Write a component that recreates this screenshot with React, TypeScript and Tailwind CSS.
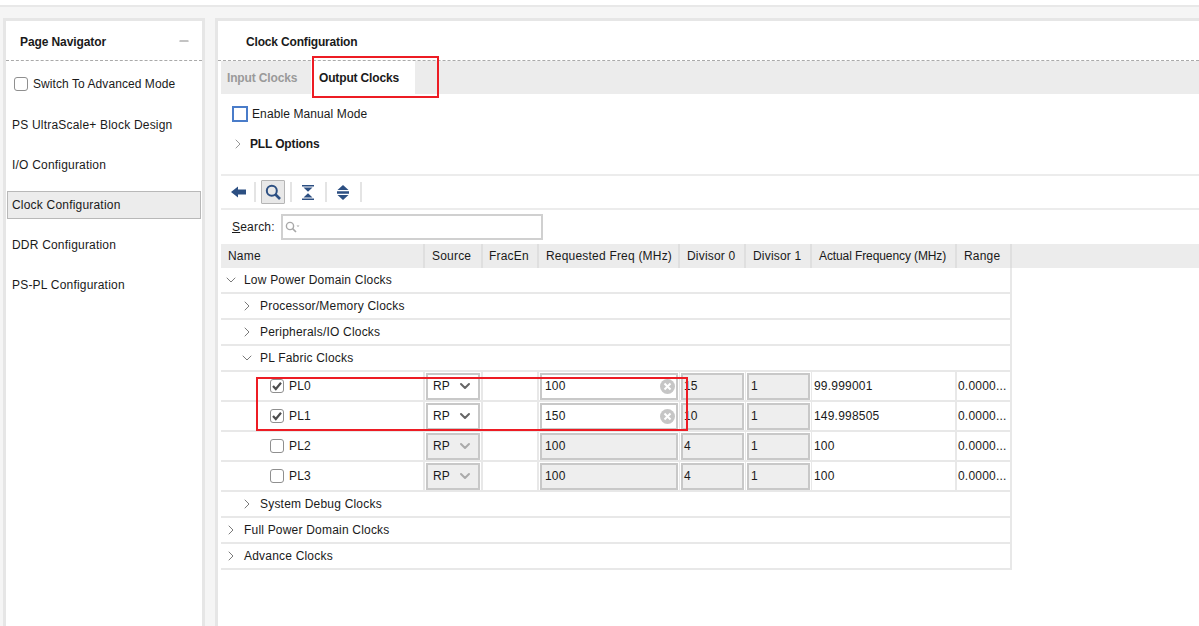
import { ChevronDown, ChevronRight, Minus } from 'lucide-react';

const columns = [
    { label: 'Name', cls: 'w-[204px] pl-[7px]' },
    { label: 'Source', cls: 'w-[58px] pl-[7px]' },
    { label: 'FracEn', cls: 'w-[56px] pl-[6px]' },
    { label: 'Requested Freq (MHz)', cls: 'w-[141px] pl-[7px]' },
    { label: 'Divisor 0', cls: 'w-[66px] pl-[7px]' },
    { label: 'Divisor 1', cls: 'w-[66px] pl-[7px]' },
    { label: 'Actual Frequency (MHz)', cls: 'w-[145px] pl-[7px] tracking-[-0.1px]' },
    { label: 'Range', cls: 'w-[55px] pl-[7px]' },
];

const pllRows = [
    { name: 'PL0', on: true, freq: '100', div0: '15', actual: '99.999001' },
    { name: 'PL1', on: true, freq: '150', div0: '10', actual: '149.998505' },
    { name: 'PL2', on: false, freq: '100', div0: '4', actual: '100' },
    { name: 'PL3', on: false, freq: '100', div0: '4', actual: '100' },
];

function Checkbox({ checked }: { checked?: boolean }) {
    return (
        <span className="flex h-[14px] w-[14px] shrink-0 items-center justify-center rounded-[3px] border-[1.5px] border-[#8f8f8f] bg-white">
            {checked && (
                <svg width="10" height="10" viewBox="0 0 10 10">
                    <path d="M1 5 L3.8 8 L9 1.8" fill="none" stroke="#4d4d4d" strokeWidth="2.2" />
                </svg>
            )}
        </span>
    );
}

function TreeRow({ label, indent, open }: { label: string; indent: string; open?: boolean }) {
    return (
        <div className={`flex h-[26px] w-[791px] items-center border-b-2 border-r-2 border-[#e8e8e8] ${indent}`}>
            <span className="mr-[5px] flex w-[16px] shrink-0 justify-center text-[#707070]">
                {open ? <ChevronDown size={16} strokeWidth={1.4} /> : <ChevronRight size={18} strokeWidth={1.4} />}
            </span>
            <span>{label}</span>
        </div>
    );
}

function FieldBox({ text, className }: { text: string; className: string }) {
    return (
        <div className={`flex h-[27px] items-center border-2 border-[#c8c8c8] bg-[#eeeeee] pl-[2px] ${className}`}>{text}</div>
    );
}

function PllRow({ row }: { row: (typeof pllRows)[number] }) {
    return (
        <div className="flex h-[30px] w-[791px] border-b-2 border-r-2 border-[#e8e8e8]">
            <div className="flex w-[204px] items-center border-r-2 border-[#e8e8e8] pl-[49px]">
                <Checkbox checked={row.on} />
                <span className="ml-[5px]">{row.name}</span>
            </div>
            <div className="flex w-[58px] items-center border-r-2 border-[#e8e8e8] pl-px">
                <div className={`flex h-[27px] w-[54px] items-center justify-between border-2 border-[#c8c8c8] pl-[5px] pr-[5px] ${row.on ? 'bg-white' : 'bg-[#eeeeee]'}`}>
                    RP
                    <ChevronDown size={16} strokeWidth={3} className={row.on ? 'text-[#666]' : 'text-[#aaa]'} />
                </div>
            </div>
            <div className="w-[56px] border-r-2 border-[#e8e8e8]" />
            <div className="flex w-[141px] items-center border-r border-[#e8e8e8] pl-px">
                <div className={`flex h-[27px] w-[138px] items-center justify-between border-2 border-[#c8c8c8] pl-[3px] pr-[1px] ${row.on ? 'bg-white' : 'bg-[#eeeeee]'}`}>
                    {row.freq}
                    {row.on && (
                        <svg width="15" height="15" viewBox="0 0 16 16">
                            <circle cx="8" cy="8" r="8" fill="#c6c6c6" />
                            <path d="M4.8 4.8 L11.2 11.2 M11.2 4.8 L4.8 11.2" stroke="#fff" strokeWidth="2.2" />
                        </svg>
                    )}
                </div>
            </div>
            <div className="flex w-[66px] items-center border-r border-[#e8e8e8] pl-px">
                <FieldBox text={row.div0} className="w-[63px] !pl-px" />
            </div>
            <div className="flex w-[66px] items-center border-r border-[#e8e8e8] pl-px">
                <FieldBox text="1" className="w-[63px]" />
            </div>
            <div className="flex w-[145px] items-center border-r-2 border-[#e8e8e8] pl-[2px]">{row.actual}</div>
            <div className="flex w-[53px] items-center pl-px">0.0000...</div>
        </div>
    );
}

function Separator({ className }: { className: string }) {
    return <span className={`h-[20px] w-[2px] shrink-0 bg-[#e4e4e4] ${className}`} />;
}

export default function App() {
    return (
        <div className="h-[626px] w-[1199px] overflow-hidden bg-white font-['Liberation_Sans',Arial,sans-serif] text-[12px] tracking-[0.2px] text-[#1a1a1a]">
            <div className="h-[5px] bg-white" />
            <div className="flex h-[621px] gap-[10px] border-t-2 border-[#e8e8e8] bg-[#f5f5f5] pl-[3px] pt-[11px]">
                {/* page navigator */}
                <aside className="h-full w-[202px] shrink-0 border-[3px] border-b-0 border-[#e6e6e6] bg-white">
                    <div className="flex h-[40px] items-center justify-between border-b border-dashed border-[#aaa] pl-[14px] pr-[11px]">
                        <span className="pt-[2px] font-bold tracking-[-0.1px]">Page Navigator</span>
                        <Minus size={14} className="text-[#888]" />
                    </div>
                    <label className="flex h-[43px] items-center gap-[5px] pl-[8px] pt-[2px] tracking-[0.07px]">
                        <Checkbox />
                        Switch To Advanced Mode
                    </label>
                    <nav className="flex flex-col gap-[12px] px-px pt-[7px]">
                        {['PS UltraScale+ Block Design', 'I/O Configuration', 'Clock Configuration', 'DDR Configuration', 'PS-PL Configuration'].map((item) => (
                            <div
                                key={item}
                                className={`flex h-[28px] items-center border pl-[4px] ${item === 'Clock Configuration' ? 'border-[#b8b8b8] bg-[#ececec]' : 'border-transparent'}`}
                            >
                                {item}
                            </div>
                        ))}
                    </nav>
                </aside>

                {/* clock configuration */}
                <main className="h-full min-w-0 flex-1 border-l-[3px] border-t-[3px] border-[#e6e6e6] bg-white">
                    <div className="flex h-[40px] items-center border-b border-dashed border-[#aaa] pl-[28px] pt-[2px] font-bold tracking-[-0.17px]">Clock Configuration</div>

                    <div className="relative pl-[3px]">
                        <div className="flex h-[33px] items-center whitespace-nowrap bg-[#ececec] font-bold tracking-[-0.15px]">
                            <span className="w-[76px] pl-[6px] text-[#9a9a9a]">Input Clocks</span>
                            <span className="ml-[14px] flex h-full w-[104px] items-center bg-white pl-[8px]">Output Clocks</span>
                        </div>
                        <span className="absolute left-[94px] top-[-5px] h-[42px] w-[127px] border-2 border-[#ed1c24]" />

                        <div className="flex h-[40px] items-center pl-[11px]">
                            <span className="h-[16px] w-[16px] border-2 border-[#4a7cc9] bg-white" />
                            <span className="ml-[4px] tracking-[0.1px]">Enable Manual Mode</span>
                        </div>
                        <div className="flex h-[20px] items-center pl-[9px] font-bold tracking-[-0.15px]">
                            <span className="mr-[4px] flex w-[16px] justify-center text-[#888]">
                                <ChevronRight size={18} strokeWidth={1.3} />
                            </span>
                            PLL Options
                        </div>
                        <div className="h-[22px] border-b-2 border-[#ececec]" />

                        <div className="flex h-[34px] items-center border-b-2 border-[#ececec] pl-[10px]">
                            <svg width="15" height="12" viewBox="0 0 15 12" className="mr-[8px] shrink-0">
                                <path d="M0 6 L7 0.5 V3.5 H15 V8.5 H7 V11.5 Z" fill="#2c4f82" />
                            </svg>
                            <Separator className="" />
                            <span className="ml-[5px] flex h-[24px] w-[24px] shrink-0 items-center justify-center rounded-[1px] border border-[#b5b5b5] bg-[#e8e8e8]">
                                <svg width="16" height="16" viewBox="0 0 16 16" fill="none" stroke="#2c4f82">
                                    <circle cx="6.8" cy="6.8" r="5" strokeWidth="2" />
                                    <path d="M10.5 10.5 L15 15" strokeWidth="2.6" />
                                </svg>
                            </span>
                            <Separator className="ml-[5px]" />
                            <svg width="12" height="15" viewBox="0 0 12 15" className="ml-[10px] shrink-0" fill="#2c4f82">
                                <path d="M0 0 H12 V1.5 H0 Z M1.5 2.5 H10.5 L6 6.8 Z M6 8.2 L10.5 12.5 H1.5 Z M0 13.5 H12 V15 H0 Z" />
                            </svg>
                            <Separator className="ml-[11px]" />
                            <svg width="12" height="15" viewBox="0 0 12 15" className="ml-[10px] shrink-0" fill="#2c4f82">
                                <path d="M6 0 L11.5 5 H0.5 Z M0 6.3 H12 V8.7 H0 Z M0.5 10 H11.5 L6 15 Z" />
                            </svg>
                            <Separator className="ml-[11px]" />
                        </div>

                        <div className="flex h-[34px] items-center pl-[11px]">
                            <span>
                                <span className="underline">S</span>earch:
                            </span>
                            <div className="ml-[6px] flex h-[26px] w-[262px] items-center border-2 border-[#d0d0d0] pl-[2px]">
                                <svg width="15" height="12" viewBox="0 0 15 12" fill="none" stroke="#a8a8a8">
                                    <circle cx="5" cy="5" r="3.6" strokeWidth="1.4" />
                                    <path d="M7.6 7.6 L11 11" strokeWidth="1.6" />
                                    <path d="M11.5 4.5 H14.5 L13 6 Z" fill="#a8a8a8" stroke="none" />
                                </svg>
                            </div>
                        </div>

                        {/* clocks table */}
                        <div className="relative">
                            <div className="flex h-[24px] items-center bg-[#ececec]">
                                {columns.map((column) => (
                                    <div key={column.label} className={`flex h-full shrink-0 items-center border-r-2 border-[#dfdfdf] ${column.cls}`}>
                                        {column.label}
                                    </div>
                                ))}
                            </div>
                            <TreeRow label="Low Power Domain Clocks" indent="pl-[2px]" open />
                            <TreeRow label="Processor/Memory Clocks" indent="pl-[18px]" />
                            <TreeRow label="Peripherals/IO Clocks" indent="pl-[18px]" />
                            <TreeRow label="PL Fabric Clocks" indent="pl-[18px]" open />
                            {pllRows.map((row) => (
                                <PllRow key={row.name} row={row} />
                            ))}
                            <TreeRow label="System Debug Clocks" indent="pl-[18px]" />
                            <TreeRow label="Full Power Domain Clocks" indent="pl-[2px]" />
                            <TreeRow label="Advance Clocks" indent="pl-[2px]" />
                            <span className="absolute left-[35px] top-[133px] h-[54px] w-[432px] border-2 border-[#ed1c24]" />
                        </div>
                    </div>
                </main>
            </div>
        </div>
    );
}
